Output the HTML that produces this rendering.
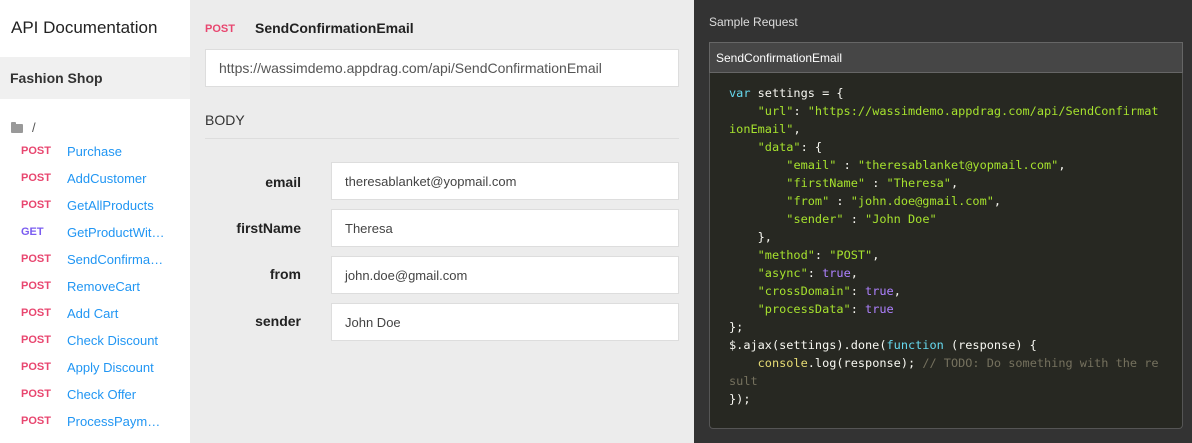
<!DOCTYPE html>
<html><head><meta charset="utf-8"><style>
*{box-sizing:border-box;margin:0;padding:0}
body{width:1192px;height:443px;overflow:hidden;font-family:"Liberation Sans",sans-serif;position:relative;background:#ececec}
#side{position:absolute;left:0;top:0;width:190px;height:443px;background:#fff}
#side h1{position:absolute;left:11px;top:18px;font-size:17px;font-weight:normal;color:#222}
#fs{position:absolute;left:0;top:57px;width:190px;height:42px;background:#f0f0f0;font-weight:bold;font-size:14px;color:#333;padding:13px 0 0 10px}
.folder{position:absolute;left:11px;top:124px;width:12px;height:9px;background:#999;border-radius:1px}
.folder:before{content:"";position:absolute;left:0;top:-2px;width:5px;height:3px;background:#999;border-radius:1px 1px 0 0}
.slash{position:absolute;left:32px;top:120px;font-size:13px;color:#555}
.it{position:absolute;left:0;height:20px;font-size:13px;width:190px}
.it b{position:absolute;left:21px;font-size:11px;color:#e8466f;top:1px}
.it b.get{color:#7a5cf0}
.it span{position:absolute;left:67px;color:#2196f3}
#mid{position:absolute;left:190px;top:0;width:504px;height:443px;background:#ececec}
.post{position:absolute;left:15px;top:23px;font-size:11px;color:#e8466f;font-weight:bold}
.title{position:absolute;left:65px;top:20px;font-size:14px;font-weight:bold;color:#222}
.url{position:absolute;left:15px;top:49px;width:474px;height:38px;background:#fff;border:1px solid #ddd;font-size:14px;color:#555;padding:10px 0 0 13px}
.body{position:absolute;left:15px;top:112px;font-size:14px;color:#333}
.hr{position:absolute;left:15px;top:138px;width:474px;height:1px;background:#ddd}
.lab{position:absolute;width:111px;text-align:right;left:0;font-size:14px;font-weight:bold;color:#222}
.inp{position:absolute;left:141px;width:348px;height:38px;background:#fff;border:1px solid #ddd;font-size:13px;color:#444;padding:11px 0 0 13px}
#right{position:absolute;left:694px;top:0;width:498px;height:443px;background:#333}
.sr{position:absolute;left:15px;top:15px;font-size:12px;color:#ddd}
.hd{position:absolute;left:15px;top:42px;width:474px;height:31px;background:#464646;border:1px solid #666;font-size:12px;color:#fff;padding:8px 0 0 6px}
.code{position:absolute;left:15px;top:73px;width:474px;height:356px;background:#272822;border:1px solid #555;border-top:none;border-radius:0 0 4px 4px}
pre{position:absolute;left:19px;top:11px;font-family:"DejaVu Sans Mono","Liberation Mono",monospace;font-size:11.9px;line-height:18px;color:#f8f8f2}
.k{color:#66d9ef}.s{color:#a6e22e}.n{color:#ae81ff}.c{color:#75715e}.f{color:#e6db74}
</style></head><body>
<div id="side">
<h1>API Documentation</h1>
<div id="fs">Fashion Shop</div>
<div class="folder"></div><div class="slash">/</div>
<div class="it" style="top:144px"><b>POST</b><span>Purchase</span></div>
<div class="it" style="top:171px"><b>POST</b><span>AddCustomer</span></div>
<div class="it" style="top:198px"><b>POST</b><span>GetAllProducts</span></div>
<div class="it" style="top:225px"><b class="get">GET</b><span>GetProductWit…</span></div>
<div class="it" style="top:252px"><b>POST</b><span>SendConfirma…</span></div>
<div class="it" style="top:279px"><b>POST</b><span>RemoveCart</span></div>
<div class="it" style="top:306px"><b>POST</b><span>Add Cart</span></div>
<div class="it" style="top:333px"><b>POST</b><span>Check Discount</span></div>
<div class="it" style="top:360px"><b>POST</b><span>Apply Discount</span></div>
<div class="it" style="top:387px"><b>POST</b><span>Check Offer</span></div>
<div class="it" style="top:414px"><b>POST</b><span>ProcessPaym…</span></div>
</div>
<div id="mid">
<div class="post">POST</div><div class="title">SendConfirmationEmail</div>
<div class="url">https://wassimdemo.appdrag.com/api/SendConfirmationEmail</div>
<div class="body">BODY</div><div class="hr"></div>
<div class="lab" style="top:174px">email</div><div class="inp" style="top:162px">theresablanket@yopmail.com</div>
<div class="lab" style="top:220px">firstName</div><div class="inp" style="top:209px">Theresa</div>
<div class="lab" style="top:266px">from</div><div class="inp" style="top:256px">john.doe@gmail.com</div>
<div class="lab" style="top:313px">sender</div><div class="inp" style="top:303px">John Doe</div>
</div>
<div id="right">
<div class="sr">Sample Request</div>
<div class="hd">SendConfirmationEmail</div>
<div class="code"><pre><span class="k">var</span> settings = {
    <span class="s">"url"</span>: <span class="s">"https://wassimdemo.appdrag.com/api/SendConfirmat</span>
<span class="s">ionEmail"</span>,
    <span class="s">"data"</span>: {
        <span class="s">"email"</span> : <span class="s">"theresablanket@yopmail.com"</span>,
        <span class="s">"firstName"</span> : <span class="s">"Theresa"</span>,
        <span class="s">"from"</span> : <span class="s">"john.doe@gmail.com"</span>,
        <span class="s">"sender"</span> : <span class="s">"John Doe"</span>
    },
    <span class="s">"method"</span>: <span class="s">"POST"</span>,
    <span class="s">"async"</span>: <span class="n">true</span>,
    <span class="s">"crossDomain"</span>: <span class="n">true</span>,
    <span class="s">"processData"</span>: <span class="n">true</span>
};
$.ajax(settings).done(<span class="k">function</span> (response) {
    <span class="f">console</span>.log(response); <span class="c">// TODO: Do something with the re</span>
<span class="c">sult</span>
});</pre></div>
</div>
</body></html>
